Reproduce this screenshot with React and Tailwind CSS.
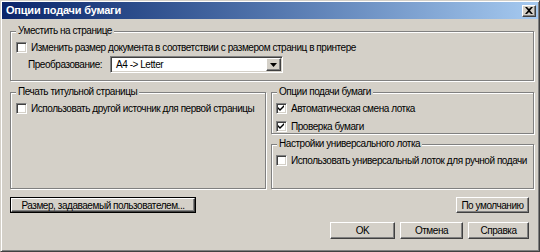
import React from "react";

const Check = ({ checked }) => (
  <span className="w-[11px] h-[11px] shrink-0 bg-white border border-t-[#808080] border-l-[#808080] border-b-white border-r-white shadow-[inset_1px_1px_0_#404040,inset_-1px_-1px_0_#d4d0c8] flex items-center justify-center">
    {checked && (
      <svg width="7" height="7" viewBox="0 0 7 7">
        <path d="M0 2 L2 4 L6 0 L6 2 L2 6 L0 4 Z" fill="#000" />
      </svg>
    )}
  </span>
);

const Group = ({ title, className, children }) => (
  <div className={`relative border border-[#808080] shadow-[inset_1px_1px_0_#fff,1px_1px_0_#fff] ${className}`}>
    <span className="absolute left-[5px] -top-[7px] bg-[#d4d0c8] px-[2px] leading-[12px]">{title}</span>
    {children}
  </div>
);

const Btn = ({ children, className }) => (
  <div className={`flex items-center justify-center bg-[#d4d0c8] border border-t-white border-l-white border-r-[#404040] border-b-[#404040] shadow-[inset_-1px_-1px_0_#808080] ${className}`}>
    {children}
  </div>
);

export default function App() {
  return (
    <div
      className="w-[540px] h-[252px] bg-[#d4d0c8] flex flex-col border border-t-[#d4d0c8] border-l-[#d4d0c8] border-r-[#404040] border-b-[#404040] shadow-[inset_1px_1px_0_#fff,inset_-1px_-1px_0_#808080] p-[1px] text-[10px] leading-[15px] tracking-[-0.45px] whitespace-nowrap text-black"
      style={{ fontFamily: '"Liberation Sans", Arial, sans-serif' }}
    >
      {/* title bar */}
      <div className="h-[17px] flex items-center justify-between bg-gradient-to-r from-[#0a246a] to-[#a6caf0] pl-[4px] pr-[2px]">
        <span className="text-white font-bold text-[11px] tracking-[-0.2px]">Опции подачи бумаги</span>
        <Btn className="w-[14px] h-[12px]">
          <svg width="8" height="7" viewBox="0 0 8 7">
            <path d="M0 0 L2 0 L4 2 L6 0 L8 0 L5 3.5 L8 7 L6 7 L4 5 L2 7 L0 7 L3 3.5 Z" fill="#000" />
          </svg>
        </Btn>
      </div>

      <div className="flex flex-col pl-[8px]">
        <Group title="Уместить на странице" className="w-[524px] h-[50px] mt-[12px]">
          <div className="flex items-center gap-[4px] pl-[5px] pt-[8px]">
            <Check />
            <span>Изменить размер документа в соответствии с размером страниц в принтере</span>
          </div>
          <div className="flex items-center pl-[17px] mt-[1px]">
            <span className="w-[82px]">Преобразование:</span>
            <div className="w-[173px] h-[17px] bg-white flex items-center justify-between border border-t-[#808080] border-l-[#808080] border-b-white border-r-white shadow-[inset_1px_1px_0_#404040,inset_-1px_-1px_0_#d4d0c8] p-[1px]">
              <span className="pl-[4px]">A4 -&gt; Letter</span>
              <Btn className="w-[15px] h-full">
                <svg width="7" height="4" viewBox="0 0 7 4">
                  <path d="M0 0 L7 0 L3.5 4 Z" fill="#000" />
                </svg>
              </Btn>
            </div>
          </div>
        </Group>

        <div className="flex gap-[5px] mt-[11px]">
          <Group title="Печать титульной страницы" className="w-[256px] h-[97px]">
            <div className="flex items-center gap-[4px] pl-[5px] pt-[8px]">
              <Check />
              <span>Использовать другой источник для первой страницы</span>
            </div>
          </Group>
          <div className="flex flex-col">
            <Group title="Опции подачи бумаги" className="w-[263px] h-[42px]">
              <div className="flex items-center gap-[4px] pl-[4px] pt-[8px]">
                <Check checked />
                <span>Автоматическая смена лотка</span>
              </div>
              <div className="flex items-center gap-[4px] pl-[4px] mt-[3px]">
                <Check checked />
                <span>Проверка бумаги</span>
              </div>
            </Group>
            <Group title="Настройки универсального лотка" className="w-[263px] h-[45px] mt-[10px]">
              <div className="flex items-center gap-[4px] pl-[4px] pt-[8px]">
                <Check />
                <span>Использовать универсальный лоток для ручной подачи</span>
              </div>
            </Group>
          </div>
        </div>

        <div className="flex justify-between items-center mt-[8px] pr-[9px]">
          <div className="border border-black">
            <Btn className="w-[184px] h-[14px]">Размер, задаваемый пользователем...</Btn>
          </div>
          <Btn className="w-[73px] h-[16px]">По умолчанию</Btn>
        </div>

        <div className="flex justify-end gap-[5px] mt-[9px] pr-[9px]">
          <Btn className="w-[65px] h-[17px]">OK</Btn>
          <Btn className="w-[63px] h-[17px]">Отмена</Btn>
          <Btn className="w-[61px] h-[17px]">Справка</Btn>
        </div>
      </div>
    </div>
  );
}
